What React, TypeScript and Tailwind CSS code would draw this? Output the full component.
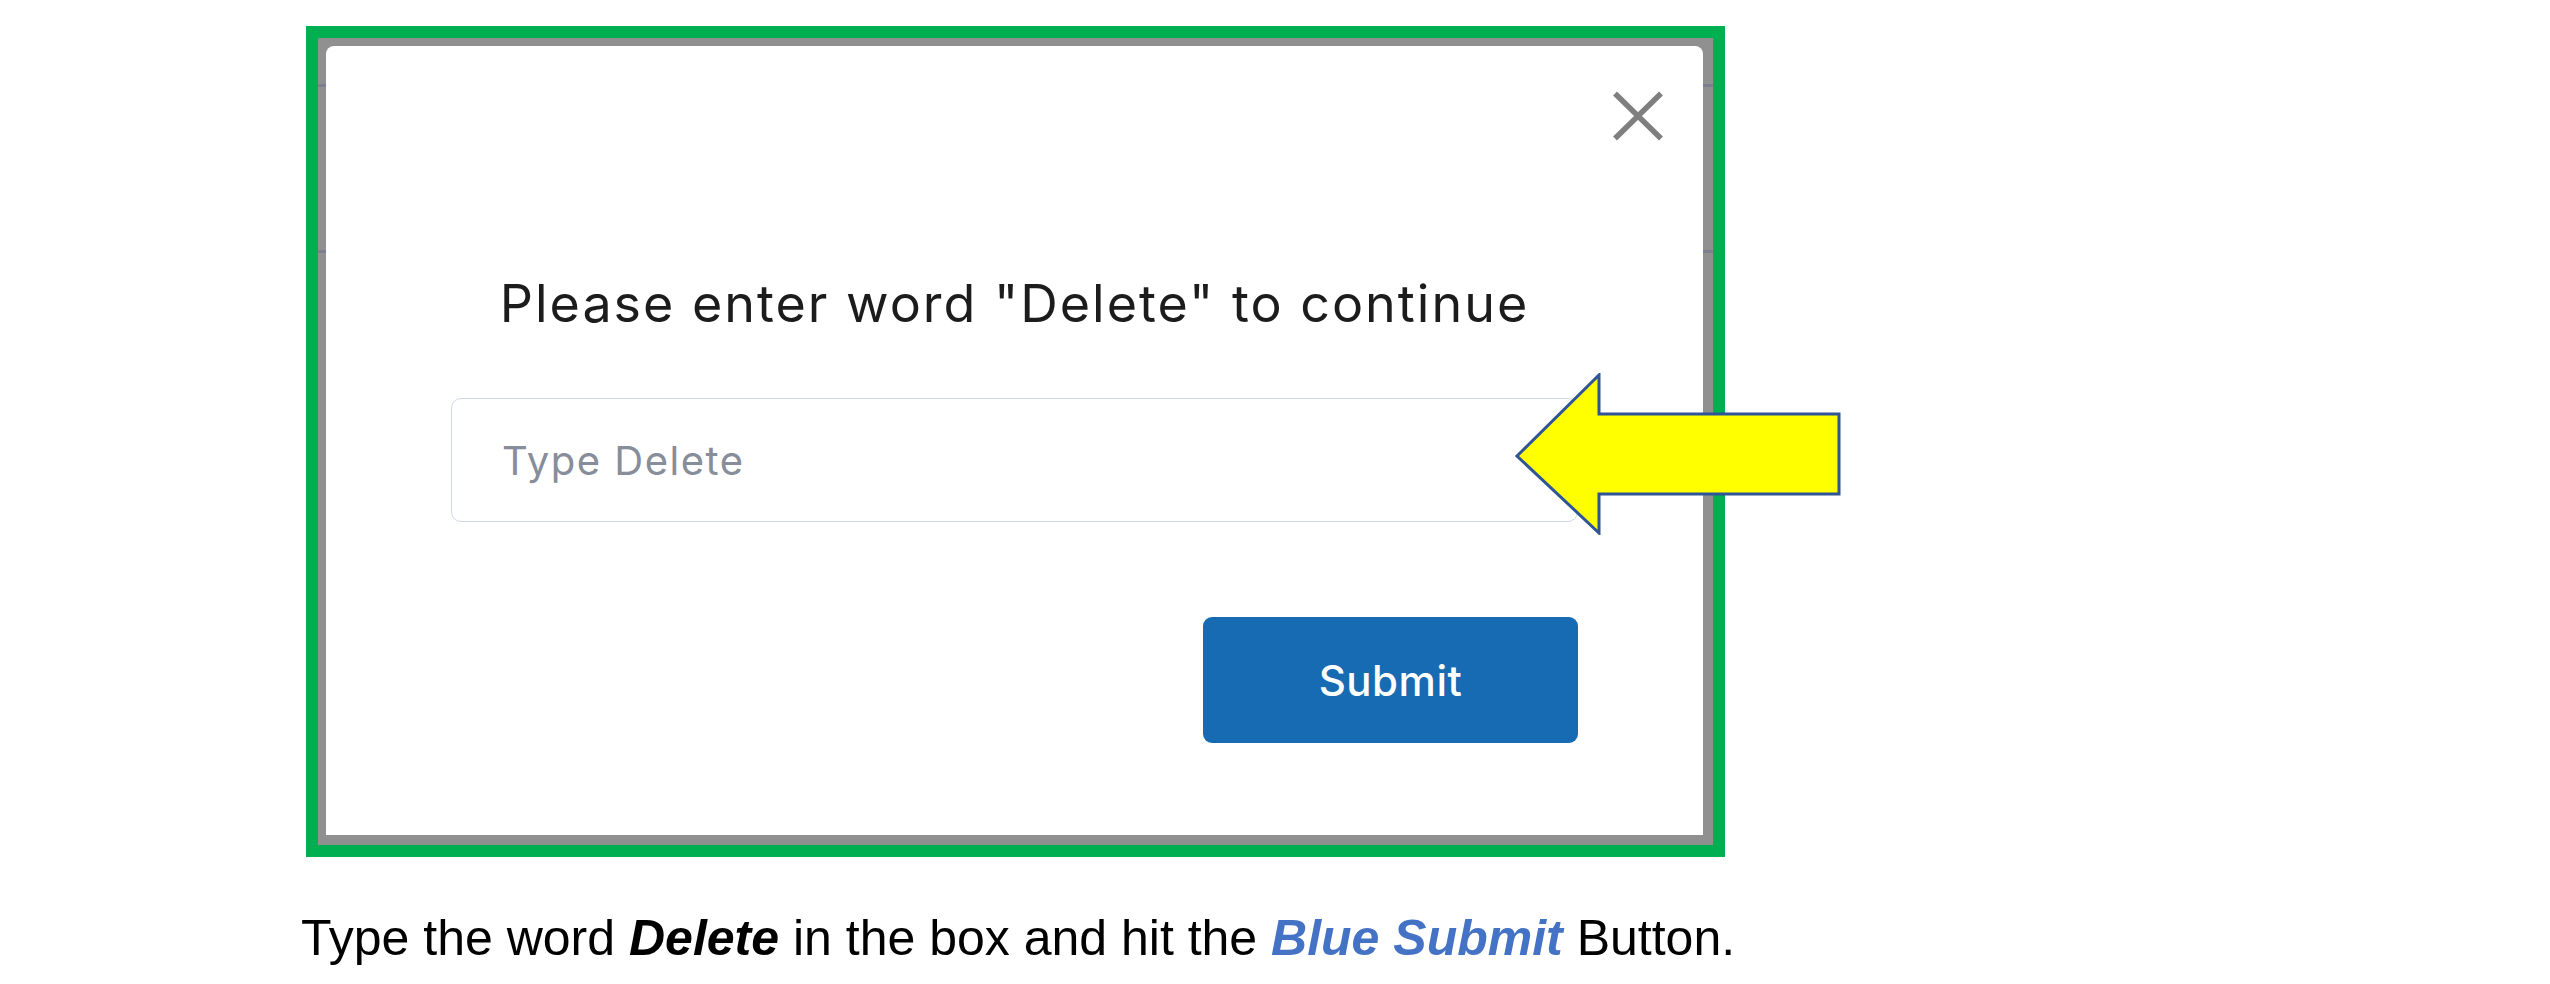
import React from 'react';

function CloseIcon() {
  return (
    <svg width="52" height="50" viewBox="0 0 52 50" fill="none">
      <path d="M3 2.5 L49 47.5 M49 2.5 L3 47.5" stroke="#7f7f7f" strokeWidth="5.5" />
    </svg>
  );
}

// Callout arrow pointing at the input
function YellowArrow() {
  return (
    <svg
      className="absolute left-[1515px] top-[373px]"
      width="327"
      height="162"
      viewBox="0 0 327 162"
      fill="none"
    >
      <polygon
        points="2,83 84,2 84,41 324,41 324,121 84,121 84,160"
        fill="#ffff00"
        stroke="#2f5597"
        strokeWidth="3"
        strokeLinejoin="miter"
      />
    </svg>
  );
}

export default function App() {
  return (
    <div className="relative w-full h-[984px] bg-white">
      <div className="pt-[26px] pl-[306px]">
        {/* Screenshot frame */}
        <div className="w-[1419px] h-[831px] border-[12px] border-[#00b050] bg-[#909090] pt-[8px] pl-[8px] pr-[10px] pb-[10px] relative">
          <div className="absolute left-0 top-[46px] w-[8px] h-[3px] bg-[#7b7f8e]" />
          <div className="absolute left-0 top-[212px] w-[8px] h-[3px] bg-[#7b7f8e]" />
          <div className="absolute right-0 top-[46px] w-[10px] h-[3px] bg-[#7b7f8e]" />
          <div className="absolute right-0 top-[212px] w-[10px] h-[3px] bg-[#7b7f8e]" />

          {/* Modal */}
          <div className="h-full bg-white rounded-t-[8px] flex flex-col font-['Inter','Noto_Sans',sans-serif]">
            <div className="flex justify-end pt-[45px] pr-[39px]">
              <button className="w-[52px] h-[50px] flex items-center justify-center">
                <CloseIcon />
              </button>
            </div>

            <h2 className="mt-[137px] text-center text-[52px] leading-none font-normal text-[#1c1c1c] tracking-[2px]">
              Please enter word "Delete" to continue
            </h2>

            <div className="mt-[68px] px-[125px] flex flex-col">
              <input
                type="text"
                placeholder="Type Delete"
                className="h-[124px] w-full rounded-[10px] border-[1.5px] border-[#d0d8e6] pl-[50px] text-[40px] tracking-[1.5px] text-[#333] placeholder:text-[#878d99] outline-none"
              />
              <div className="mt-[95px] flex justify-end">
                <button className="w-[375px] h-[126px] rounded-[9px] bg-[#166bb2] text-white text-[42px] font-medium tracking-[0.5px]">
                  Submit
                </button>
              </div>
            </div>
          </div>
        </div>
      </div>

      <p className="mt-[56px] pl-[301px] text-[50px] leading-none text-black font-['Liberation_Sans','Arial',sans-serif]">
        Type the word <span className="font-bold italic">Delete</span> in the box and hit the{' '}
        <span className="font-bold italic text-[#4472c4]">Blue Submit</span> Button.
      </p>

      <YellowArrow />
    </div>
  );
}
